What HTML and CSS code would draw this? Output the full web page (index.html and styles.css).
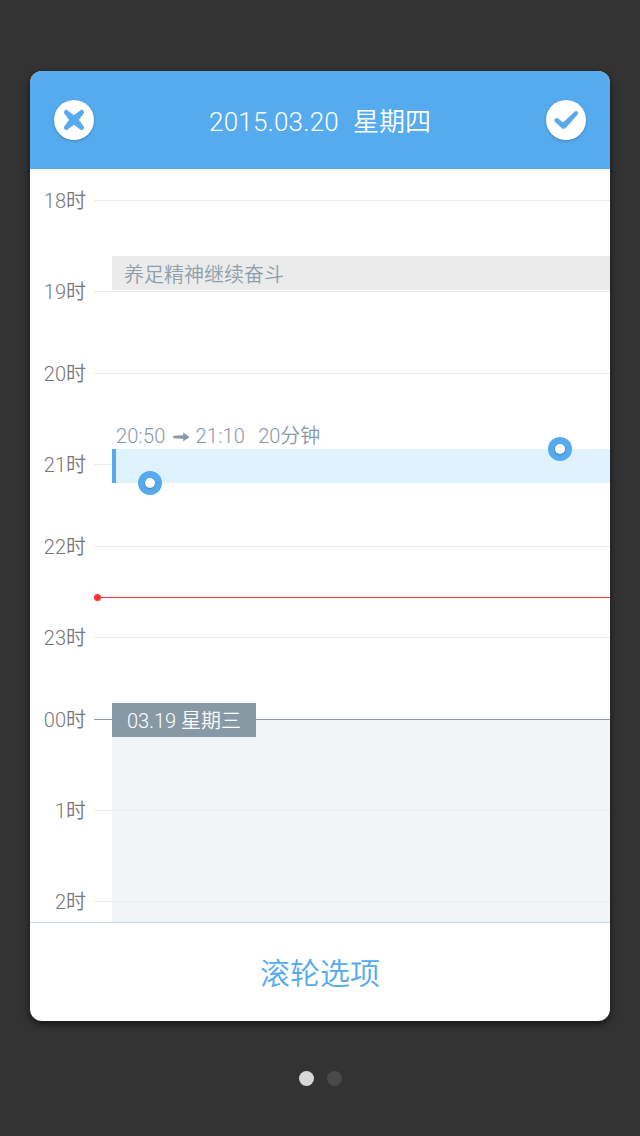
FILE: index.html
```html
<!DOCTYPE html>
<html lang="zh-CN">
<head>
<meta charset="utf-8">
<title>2015.03.20 星期四</title>
<link rel="stylesheet" href="styles.css">
</head>
<body>
<main class="card">
  <header class="header">
    <button class="round" aria-label="关闭"><svg width="40" height="40" viewBox="0 0 40 40"><path d="M12.3 12.3 19.9 18 27.7 12.3M12.3 27.7 19.9 22 27.7 27.7M12.3 12.3 18 19.9 12.3 27.7M27.7 12.3 22 19.9 27.7 27.7M18 20h4" fill="none" stroke="#55abee" stroke-width="4.6" stroke-linecap="round" stroke-linejoin="round"/></svg></button>
    <h1 class="title"><span class="date">2015.03.20</span><span>星期四</span></h1>
    <button class="round" aria-label="确定"><svg width="40" height="40" viewBox="0 0 40 40"><path d="M8.4 19.6Q10 17 12.4 18.6L16 21.7Q17.4 22.5 18.7 21.1L28.5 11.7Q30.3 10.2 31.8 11.8 32.6 13.2 31.5 14.7L20.2 27.6Q17.6 30 15 27.6L8.9 21.6Q8 20.7 8.4 19.6Z" fill="#55abee"/></svg></button>
  </header>
  <section class="timeline">
    <div class="day-area"></div>
    <div class="hour long"><span class="label">18时</span><i class="rule"></i></div>
    <div class="hour"><span class="label">19时</span><i class="rule"></i></div>
    <div class="hour long"><span class="label">20时</span><i class="rule"></i></div>
    <div class="hour"><span class="label">21时</span><i class="rule"></i></div>
    <div class="hour long"><span class="label">22时</span><i class="rule"></i></div>
    <div class="hour"><span class="label">23时</span><i class="rule"></i></div>
    <div class="hour long"><span class="label">00时</span><i class="rule midnight"></i></div>
    <div class="hour long"><span class="label">1时</span><i class="rule"></i></div>
    <div class="hour"><span class="label">2时</span><i class="rule"></i></div>
    <div class="event">养足精神继续奋斗</div>
    <div class="range"><span class="time">20:50</span><svg class="arrow" width="17" height="10" viewBox="0 0 17 10"><path d="M.6 3.8 10.2 3.3V.6L16.6 5 10.2 9.4V6.7L.6 6.2Q-.3 5 .6 3.8Z" fill="#8799a5"/></svg><span class="time">21:10</span><span class="duration">20分钟</span></div>
    <div class="selection"><i class="handle start"></i><i class="handle end"></i></div>
    <div class="now"></div>
    <div class="day-tag">03.19 星期三</div>
  </section>
  <footer class="footer">滚轮选项</footer>
</main>
<nav class="pager"><i class="dot active"></i><i class="dot"></i></nav>
</body>
</html>
```
FILE: styles.css
```css
* { box-sizing: border-box; }
body {
  margin: 0;
  height: 1136px;
  padding: 71px 30px 0;
  overflow: hidden;
  background: #333;
  color: #777;
  font: 350 20px/25px Roboto, "Noto Sans CJK SC", sans-serif;
}
.card {
  height: 950px;
  display: flex;
  flex-direction: column;
  overflow: hidden;
  border-radius: 12px;
  background: #fff;
  box-shadow: 0 3px 8px rgba(0, 0, 0, .6);
}
.header {
  height: 98px;
  flex: none;
  display: flex;
  align-items: center;
  justify-content: space-between;
  padding: 0 24px;
  background: #55abee;
}
.round {
  width: 40px;
  height: 40px;
  padding: 0;
  border: 0;
  border-radius: 50%;
  background: #fff;
  box-shadow: 0 1px 3px rgba(0, 0, 0, .25);
}
.round svg { display: block; }
.title {
  display: flex;
  gap: 14px;
  margin: 4px 0 0;
  color: #fff;
  font-size: 26px;
  font-weight: 350;
  line-height: 34px;
}
.date { letter-spacing: .2px; }
.timeline {
  position: relative;
  height: 753px;
  flex: none;
  padding-top: 19px;
}
.hour {
  position: relative;
  display: flex;
  align-items: center;
  gap: 8px;
  height: 25px;
  margin-bottom: 57px;
}
.hour.long { margin-bottom: 66px; }
.label { width: 56px; padding-top: 2px; text-align: right; white-space: nowrap; }
.rule { flex: 1; height: 1px; background: #ebebeb; }
.rule.midnight { background: #8799a5; }
.day-area {
  position: absolute;
  inset: 551px 0 0 82px;
  background: #f1f5f8;
}
.event {
  position: absolute;
  top: 87px;
  left: 82px;
  right: 0;
  height: 34px;
  padding-left: 12px;
  background: #ebebeb;
  color: #8d9fab;
  line-height: 38px;
}
.range {
  position: absolute;
  top: 255px;
  left: 86px;
  display: flex;
  align-items: center;
  color: #8799a5;
}
.time { letter-spacing: .2px; }
.arrow { margin: 0 6px 0 7px; }
.duration { margin-left: 13px; }
.selection {
  position: absolute;
  top: 280px;
  left: 82px;
  right: 0;
  height: 34px;
  border-left: 4px solid #55abee;
  background: #dff3ff;
}
.handle {
  position: absolute;
  display: grid;
  place-items: center;
  width: 24px;
  height: 24px;
  border-radius: 50%;
  background: #55abee;
}
.handle::before {
  content: "";
  width: 10px;
  height: 10px;
  border-radius: 50%;
  background: #fff;
  box-shadow: 0 1px 2px rgba(0, 0, 0, .25);
}
.start { left: 22px; bottom: -12px; }
.end { right: 38px; top: -12px; }
.now {
  position: absolute;
  top: 428px;
  left: 64px;
  right: 0;
  height: 1px;
  background: #f33;
}
.now::before {
  content: "";
  position: absolute;
  top: -3px;
  left: 0;
  width: 7px;
  height: 7px;
  border-radius: 50%;
  background: #f33;
}
.day-tag {
  position: absolute;
  top: 534px;
  left: 82px;
  width: 144px;
  height: 34px;
  background: #8799a5;
  color: #fff;
  line-height: 36px;
  text-align: center;
}
.footer {
  flex: 1;
  display: flex;
  align-items: center;
  justify-content: center;
  padding-top: 2px;
  border-top: 1px solid #cdd8e0;
  color: #55abee;
  font-size: 30px;
}
.pager {
  display: flex;
  justify-content: center;
  gap: 13px;
  padding-top: 50px;
}
.dot {
  width: 15px;
  height: 15px;
  border-radius: 50%;
  background: #4a4a4a;
}
.dot.active { background: #d8d8d8; }
```
